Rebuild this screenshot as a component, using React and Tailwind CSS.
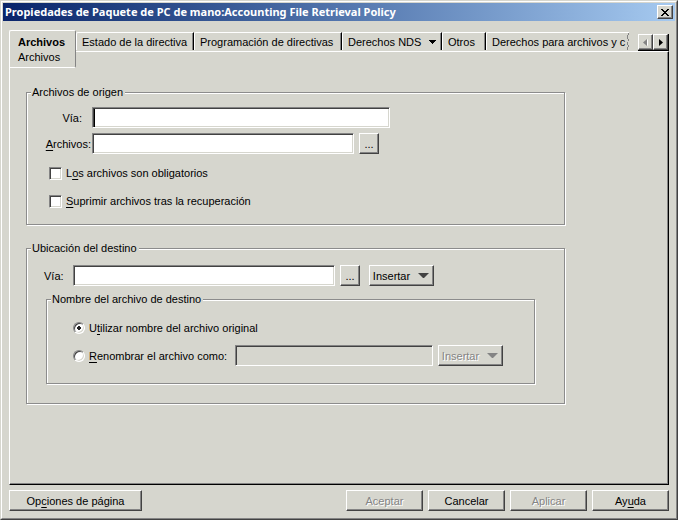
import React, { useState } from "react";
import clsx from "clsx";

const raised =
  "border border-t-white border-l-white border-r-[#424242] border-b-[#424242] shadow-[inset_-1px_-1px_0_#848484] bg-[#d6d6ce]";
const sunken =
  "border border-t-[#848484] border-l-[#848484] border-r-white border-b-white outline-none";

const TABS = [
  { label: "Estado de la directiva", width: "w-[118px]" },
  { label: "Programación de directivas", width: "w-[148px]" },
  { label: "Derechos NDS", width: "w-[100px]", menu: true },
  { label: "Otros", width: "w-[44px]" },
];

const Arrow = ({ className }) => (
  <svg width="12" height="6" viewBox="0 0 12 6" className={className} aria-hidden="true">
    <path d="M0 0h11L6 5H5z" fill="currentColor" />
  </svg>
);

const Button = ({ className, disabled, children, ...props }) => (
  <button
    type="button"
    disabled={disabled}
    className={clsx(
      raised,
      "h-[21px] shrink-0 flex items-center justify-center whitespace-nowrap",
      disabled && "text-[#848484] [text-shadow:1px_1px_0_#fff]",
      className
    )}
    {...props}
  >
    {children}
  </button>
);

const TextBox = ({ className, ...props }) => (
  <input
    type="text"
    className={clsx(
      sunken,
      "h-[21px] min-w-0 px-1 bg-white shadow-[inset_1px_1px_0_#424242,inset_-1px_-1px_0_#d6d6ce] disabled:bg-[#d6d6ce]",
      className
    )}
    {...props}
  />
);

const Group = ({ title, className, children }) => (
  <fieldset className="w-full border border-[#8c8c8c] shadow-[1px_1px_0_#fff,inset_1px_1px_0_#fff]">
    <legend className="ml-1 pl-px pr-0.5 bg-[#d6d6ce] leading-[13px]">{title}</legend>
    <div className={className}>{children}</div>
  </fieldset>
);

const Key = ({ children }) => (
  <span className="underline underline-offset-2">{children}</span>
);

const CheckBox = ({ id, children }) => (
  <div className="flex items-center gap-1 h-[14px]">
    <input
      id={id}
      type="checkbox"
      className={clsx(
        sunken,
        "appearance-none size-[13px] bg-white shadow-[inset_1px_1px_0_#424242,inset_-1px_-1px_0_#d6d6ce] checked:bg-[#424242]"
      )}
    />
    <label htmlFor={id}>{children}</label>
  </div>
);

const Radio = (props) => (
  <input
    type="radio"
    name="destino"
    className="appearance-none size-3 shrink-0 rounded-full bg-white border border-t-[#848484] border-l-[#848484] border-r-white border-b-white shadow-[inset_1px_1px_0_#424242,inset_-1px_-1px_0_#d6d6ce] checked:bg-[radial-gradient(circle,#222_0_2px,#fff_2px)]"
    {...props}
  />
);

const TitleBar = () => (
  <header className="h-[18px] flex items-center justify-between px-0.5 bg-linear-to-r from-[#0a246a] to-[#a6caf0]">
    <h1 className="text-white font-bold font-['Noto_Sans','Open_Sans',sans-serif] text-[11px] whitespace-nowrap">
      Propiedades de Paquete de PC de mano:Accounting File Retrieval Policy
    </h1>
    <button
      type="button"
      aria-label="Cerrar"
      className={clsx(raised, "w-4 h-[14px] flex items-center justify-center")}
    >
      <svg width="8" height="7" viewBox="0 0 8 7" shapeRendering="crispEdges">
        <path
          d="M0 0h2v1h1v1h2V1h1V0h2v1H7v1H6v1H5v1h1v1h1v1h1v1H6V6H5V5H3v1H2v1H0V6h1V5h1V4h1V3H2V2H1V1H0z"
          fill="#000"
        />
      </svg>
    </button>
  </header>
);

const Tabs = () => (
  <div className="flex h-[21px] items-start">
    <div role="tablist" className="flex min-w-0 items-start">
      <button
        type="button"
        role="tab"
        aria-selected="true"
        className="relative z-10 w-[67px] h-[38px] shrink-0 pl-2 pt-0.5 text-left leading-[15px] rounded-t-xs rounded-br-xs bg-[#d6d6ce] border border-t-white border-l-white border-b-white border-r-[#848484]"
      >
        <span className="block font-bold">Archivos</span>
        <span className="block">Archivos</span>
      </button>
      {TABS.map((tab) => (
        <button
          key={tab.label}
          type="button"
          role="tab"
          aria-selected="false"
          className={clsx(
            "mt-0.5 h-[18px] shrink-0 flex items-center gap-2 pl-[5px] whitespace-nowrap rounded-tl-xs border-t border-l border-white border-r border-r-black shadow-[inset_-1px_0_0_#848484]",
            tab.width
          )}
        >
          {tab.label}
          {tab.menu && (
            <svg width="7" height="4" viewBox="0 0 7 4" shapeRendering="crispEdges">
              <path d="M0 0h7v1H6v1H5v1H4v1H3V3H2V2H1V1H0z" fill="#000" />
            </svg>
          )}
        </button>
      ))}
      <button
        type="button"
        role="tab"
        aria-selected="false"
        className="mt-0.5 h-[18px] w-[143px] shrink-0 flex items-center justify-between pl-[5px] whitespace-nowrap rounded-tl-xs border-t border-l border-white"
      >
        Derechos para archivos y c
        <svg width="3" height="17" viewBox="0 0 3 17" className="shrink-0" shapeRendering="crispEdges">
          <path
            d="M2 0h1v2H2zM1 2h1v4H1zM2 6h1v2H2zM1 9h1v3H1zM2 12h1v2H2zM1 14h1v3H1z"
            fill="#848484"
          />
        </svg>
      </button>
    </div>
    <div className="ml-auto mt-1 flex shrink-0 border-r border-b border-black">
      <button
        type="button"
        disabled
        aria-label="Anterior"
        className={clsx(raised, "w-[15px] h-4 flex items-center justify-center text-[#848484]")}
      >
        <svg width="5" height="7" viewBox="0 0 5 7">
          <path d="M5 0v7L1 3.500z" fill="#fff" />
          <path d="M4 0v7L0 3.500z" fill="currentColor" />
        </svg>
      </button>
      <button
        type="button"
        aria-label="Siguiente"
        className={clsx(raised, "w-[15px] h-4 flex items-center justify-center")}
      >
        <svg width="4" height="7" viewBox="0 0 4 7">
          <path d="M0 0v7l4-3.500z" fill="#000" />
        </svg>
      </button>
    </div>
  </div>
);

const App = () => {
  const [rename, setRename] = useState(false);

  return (
    <div className="min-h-screen flex flex-col bg-[#d6d6ce] text-black font-['Liberation_Sans',Arial,sans-serif] text-[11px] leading-[14px] border border-t-[#d6d6ce] border-l-[#d6d6ce] border-r-[#424242] border-b-[#424242]">
      <div className="flex-1 flex flex-col p-px border border-t-white border-l-white border-r-[#848484] border-b-[#848484]">
        <TitleBar />
        <main className="flex-1 flex flex-col px-1.5 pt-[9px] pb-1.5">
          <Tabs />
          <section
            role="tabpanel"
            className="flex-1 px-4 pt-[34px] pb-4 border border-t-white border-l-white border-r-black border-b-black shadow-[inset_-1px_-1px_0_#848484]"
          >
            <div className="max-w-[539px] flex flex-col gap-[17px]">
              <Group title="Archivos de origen" className="pt-2 pl-[17px] pb-4">
                <div className="grid grid-cols-[48px_1fr] gap-y-[5px] items-center">
                  <label htmlFor="via" className="pr-2.5 text-right">
                    Vía:
                  </label>
                  <TextBox
                    id="via"
                    className="w-[298px] shadow-[inset_1px_1px_0_#424242,inset_2px_0_0_#000,inset_-1px_-1px_0_#d6d6ce]!"
                  />
                  <label htmlFor="archivos" className="text-right pr-px">
                    <Key>A</Key>rchivos:
                  </label>
                  <div className="flex gap-[5px]">
                    <TextBox id="archivos" className="w-[262px]" />
                    <Button className="w-5" aria-label="Examinar">
                      ...
                    </Button>
                  </div>
                </div>
                <div className="mt-3 ml-[5px] flex flex-col gap-[14px]">
                  <CheckBox id="obligatorios">
                    L<Key>o</Key>s archivos son obligatorios
                  </CheckBox>
                  <CheckBox id="suprimir">
                    <Key>S</Key>uprimir archivos tras la recuperación
                  </CheckBox>
                </div>
              </Group>

              <Group title="Ubicación del destino" className="pt-2.5 pl-[19px] pr-[29px] pb-[19px]">
                <div className="flex items-center">
                  <label htmlFor="destino-via" className="-ml-0.5 w-[29px] shrink-0">
                    Vía:
                  </label>
                  <TextBox id="destino-via" className="w-[262px]" />
                  <Button className="w-5 ml-[5px]" aria-label="Examinar destino">
                    ...
                  </Button>
                  <Button className="w-[65px] ml-[9px] gap-2" aria-haspopup="menu">
                    Insertar
                    <Arrow className="text-[#424242]" />
                  </Button>
                </div>
                <div className="mt-[7px]">
                  <Group
                    title="Nombre del archivo de destino"
                    className="pt-[15px] pl-[26px] pb-[17px]"
                  >
                    <div className="flex items-center gap-1 h-[14px]">
                      <Radio
                        id="original"
                        checked={!rename}
                        onChange={() => setRename(false)}
                      />
                      <label htmlFor="original">
                        U<Key>t</Key>ilizar nombre del archivo original
                      </label>
                    </div>
                    <div className="mt-2.5 flex items-center h-[21px]">
                      <Radio
                        id="renombrar"
                        checked={rename}
                        onChange={() => setRename(true)}
                      />
                      <label htmlFor="renombrar" className="ml-1 w-[146px] shrink-0">
                        <Key>R</Key>enombrar el archivo como:
                      </label>
                      <TextBox
                        aria-label="Nombre nuevo"
                        disabled={!rename}
                        className="w-[198px]"
                      />
                      <Button
                        className="w-[65px] ml-[5px] gap-2"
                        disabled={!rename}
                        aria-haspopup="menu"
                      >
                        Insertar
                        <Arrow />
                      </Button>
                    </div>
                  </Group>
                </div>
              </Group>
            </div>
          </section>

          <footer className="mt-[5px] flex gap-[5px]">
            <Button className="w-[133px] mr-auto">
              <span>
                Op<Key>c</Key>iones de página
              </span>
            </Button>
            <Button className="w-[77px]" disabled>
              Aceptar
            </Button>
            <Button className="w-[77px]">Cancelar</Button>
            <Button className="w-[77px]" disabled>
              Aplicar
            </Button>
            <Button className="w-[77px]">
              <span>
                Ay<Key>u</Key>da
              </span>
            </Button>
          </footer>
        </main>
      </div>
    </div>
  );
};

export default App;
